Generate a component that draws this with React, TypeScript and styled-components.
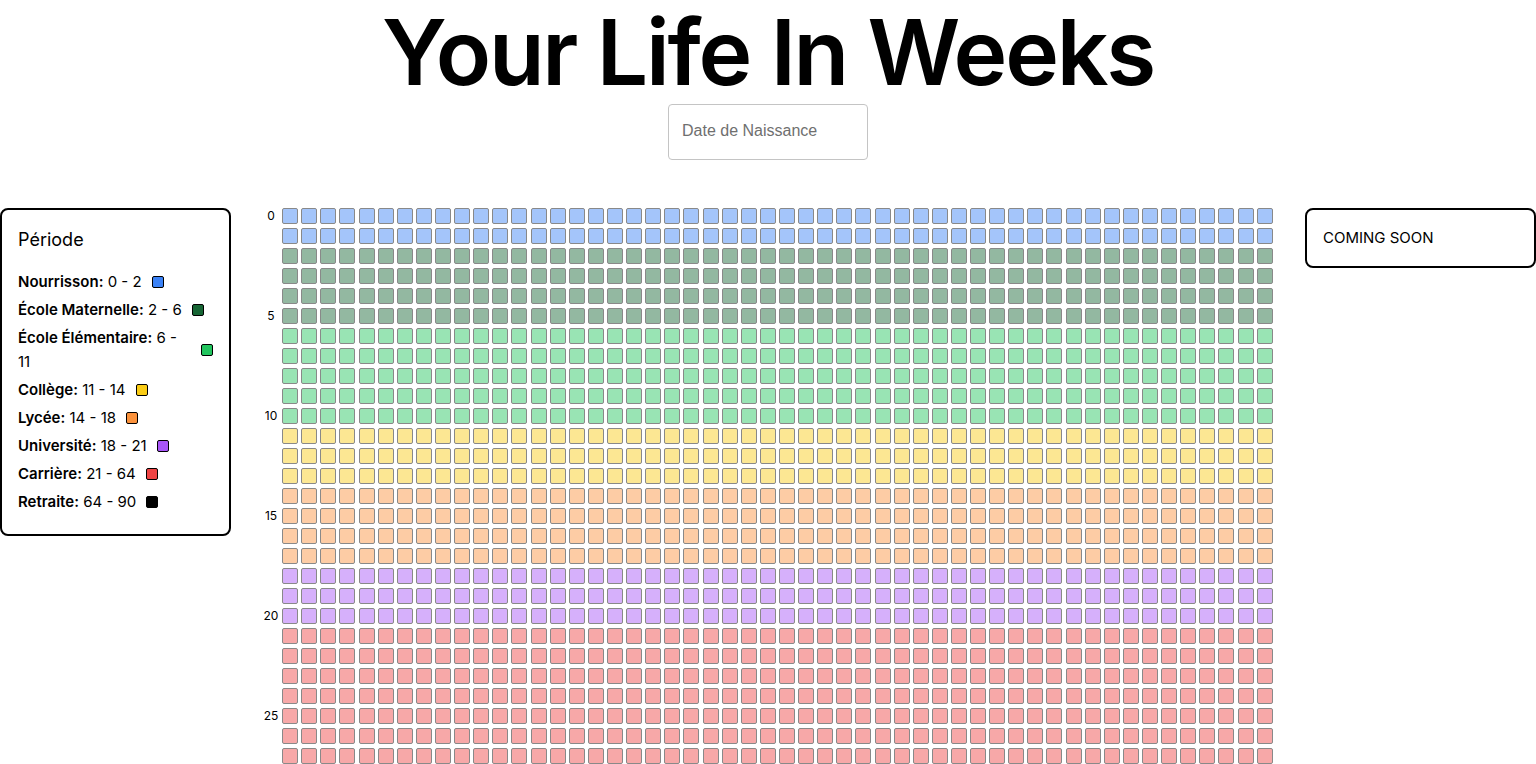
import React from 'react';
import styled, { createGlobalStyle } from 'styled-components';

const GlobalStyle = createGlobalStyle`
  *, *::before, *::after { box-sizing: border-box; }
  body {
    margin: 0;
    background: #fff;
    color: #000;
    font-family: Inter, sans-serif;
    font-size: 15px;
    line-height: 24px;
  }
`;

const Page = styled.div`
  min-height: 100vh;
`;

const Header = styled.header`
  display: flex;
  flex-direction: column;
  align-items: center;
  margin-bottom: 48px;
`;

const Title = styled.h1`
  margin: 0;
  font-size: 91px;
  line-height: 104px;
  font-weight: 600;
  letter-spacing: -0.025em;
`;

const DateInput = styled.input`
  width: 200px;
  height: 56px;
  padding: 0 13px 2px;
  border: 1px solid #c4c4c4;
  border-radius: 4px;
  background: #fff;
  color: #000;
  font-family: 'Liberation Sans', sans-serif;
  font-size: 16px;

  &::placeholder {
    color: #6f6f6f;
    opacity: 1;
  }
`;

const Columns = styled.main`
  display: grid;
  grid-template-columns: minmax(231px, 15%) 1fr minmax(231px, 15%);
  align-items: start;
`;

const Panel = styled.aside`
  padding: 16px;
  border: 2px solid #000;
  border-radius: 8px;
`;

const PanelTitle = styled.h2`
  margin: 0 0 16px;
  font-size: 18px;
  line-height: 28px;
  font-weight: 400;
`;

const LegendList = styled.ul`
  margin: 0;
  padding: 0;
  list-style: none;
`;

const LegendItem = styled.li`
  display: flex;
  align-items: center;
  margin-bottom: 4px;

  strong { font-weight: 600; }
`;

const Swatch = styled.span<{ $color: string }>`
  width: 12px;
  height: 12px;
  margin-left: 10px;
  border: 1px solid #000;
  border-radius: 2px;
  background: ${(p) => p.$color};
`;

const Calendar = styled.section`
  display: grid;
  gap: 4px;
  padding: 0 32px;
`;

const YearRow = styled.div`
  display: flex;
  justify-content: space-between;
`;

const YearLabel = styled.span`
  display: flex;
  justify-content: center;
  width: 16px;
  height: 16px;
  font-size: 12px;
  line-height: 16px;
`;

const Week = styled.span<{ $color: string }>`
  width: 16px;
  height: 16px;
  border: 1px solid #000;
  border-radius: 2px;
  background: ${(p) => p.$color};
  opacity: 0.46;
`;

const periods = [
  { name: 'Nourrisson', from: 0, to: 2, color: '#3b82f6' },
  { name: 'École Maternelle', from: 2, to: 6, color: '#166534' },
  { name: 'École Élémentaire', from: 6, to: 11, color: '#22c55e' },
  { name: 'Collège', from: 11, to: 14, color: '#facc15' },
  { name: 'Lycée', from: 14, to: 18, color: '#fb923c' },
  { name: 'Université', from: 18, to: 21, color: '#a855f7' },
  { name: 'Carrière', from: 21, to: 64, color: '#ef4444' },
  { name: 'Retraite', from: 64, to: 90, color: '#000000' },
];

const years = Array.from({ length: 28 }, (_, year) => year);
const weeks = Array.from({ length: 52 }, (_, week) => week);

const colorOf = (year: number) =>
  periods.find((p) => year >= p.from && year < p.to)?.color ?? '#fff';

export default function App() {
  return (
    <Page>
      <GlobalStyle />
      <Header>
        <Title>Your Life In Weeks</Title>
        <DateInput type="text" placeholder="Date de Naissance" aria-label="Date de Naissance" />
      </Header>
      <Columns>
        <Panel>
          <PanelTitle>Période</PanelTitle>
          <LegendList>
            {periods.map((p) => (
              <LegendItem key={p.name}>
                <span>
                  <strong>{p.name}:</strong> {p.from} - {p.to}
                </span>
                <Swatch $color={p.color} />
              </LegendItem>
            ))}
          </LegendList>
        </Panel>
        <Calendar>
          {years.map((year) => (
            <YearRow key={year}>
              <YearLabel>{year % 5 === 0 ? year : ''}</YearLabel>
              {weeks.map((week) => (
                <Week key={week} $color={colorOf(year)} />
              ))}
            </YearRow>
          ))}
        </Calendar>
        <Panel>COMING SOON</Panel>
      </Columns>
    </Page>
  );
}
